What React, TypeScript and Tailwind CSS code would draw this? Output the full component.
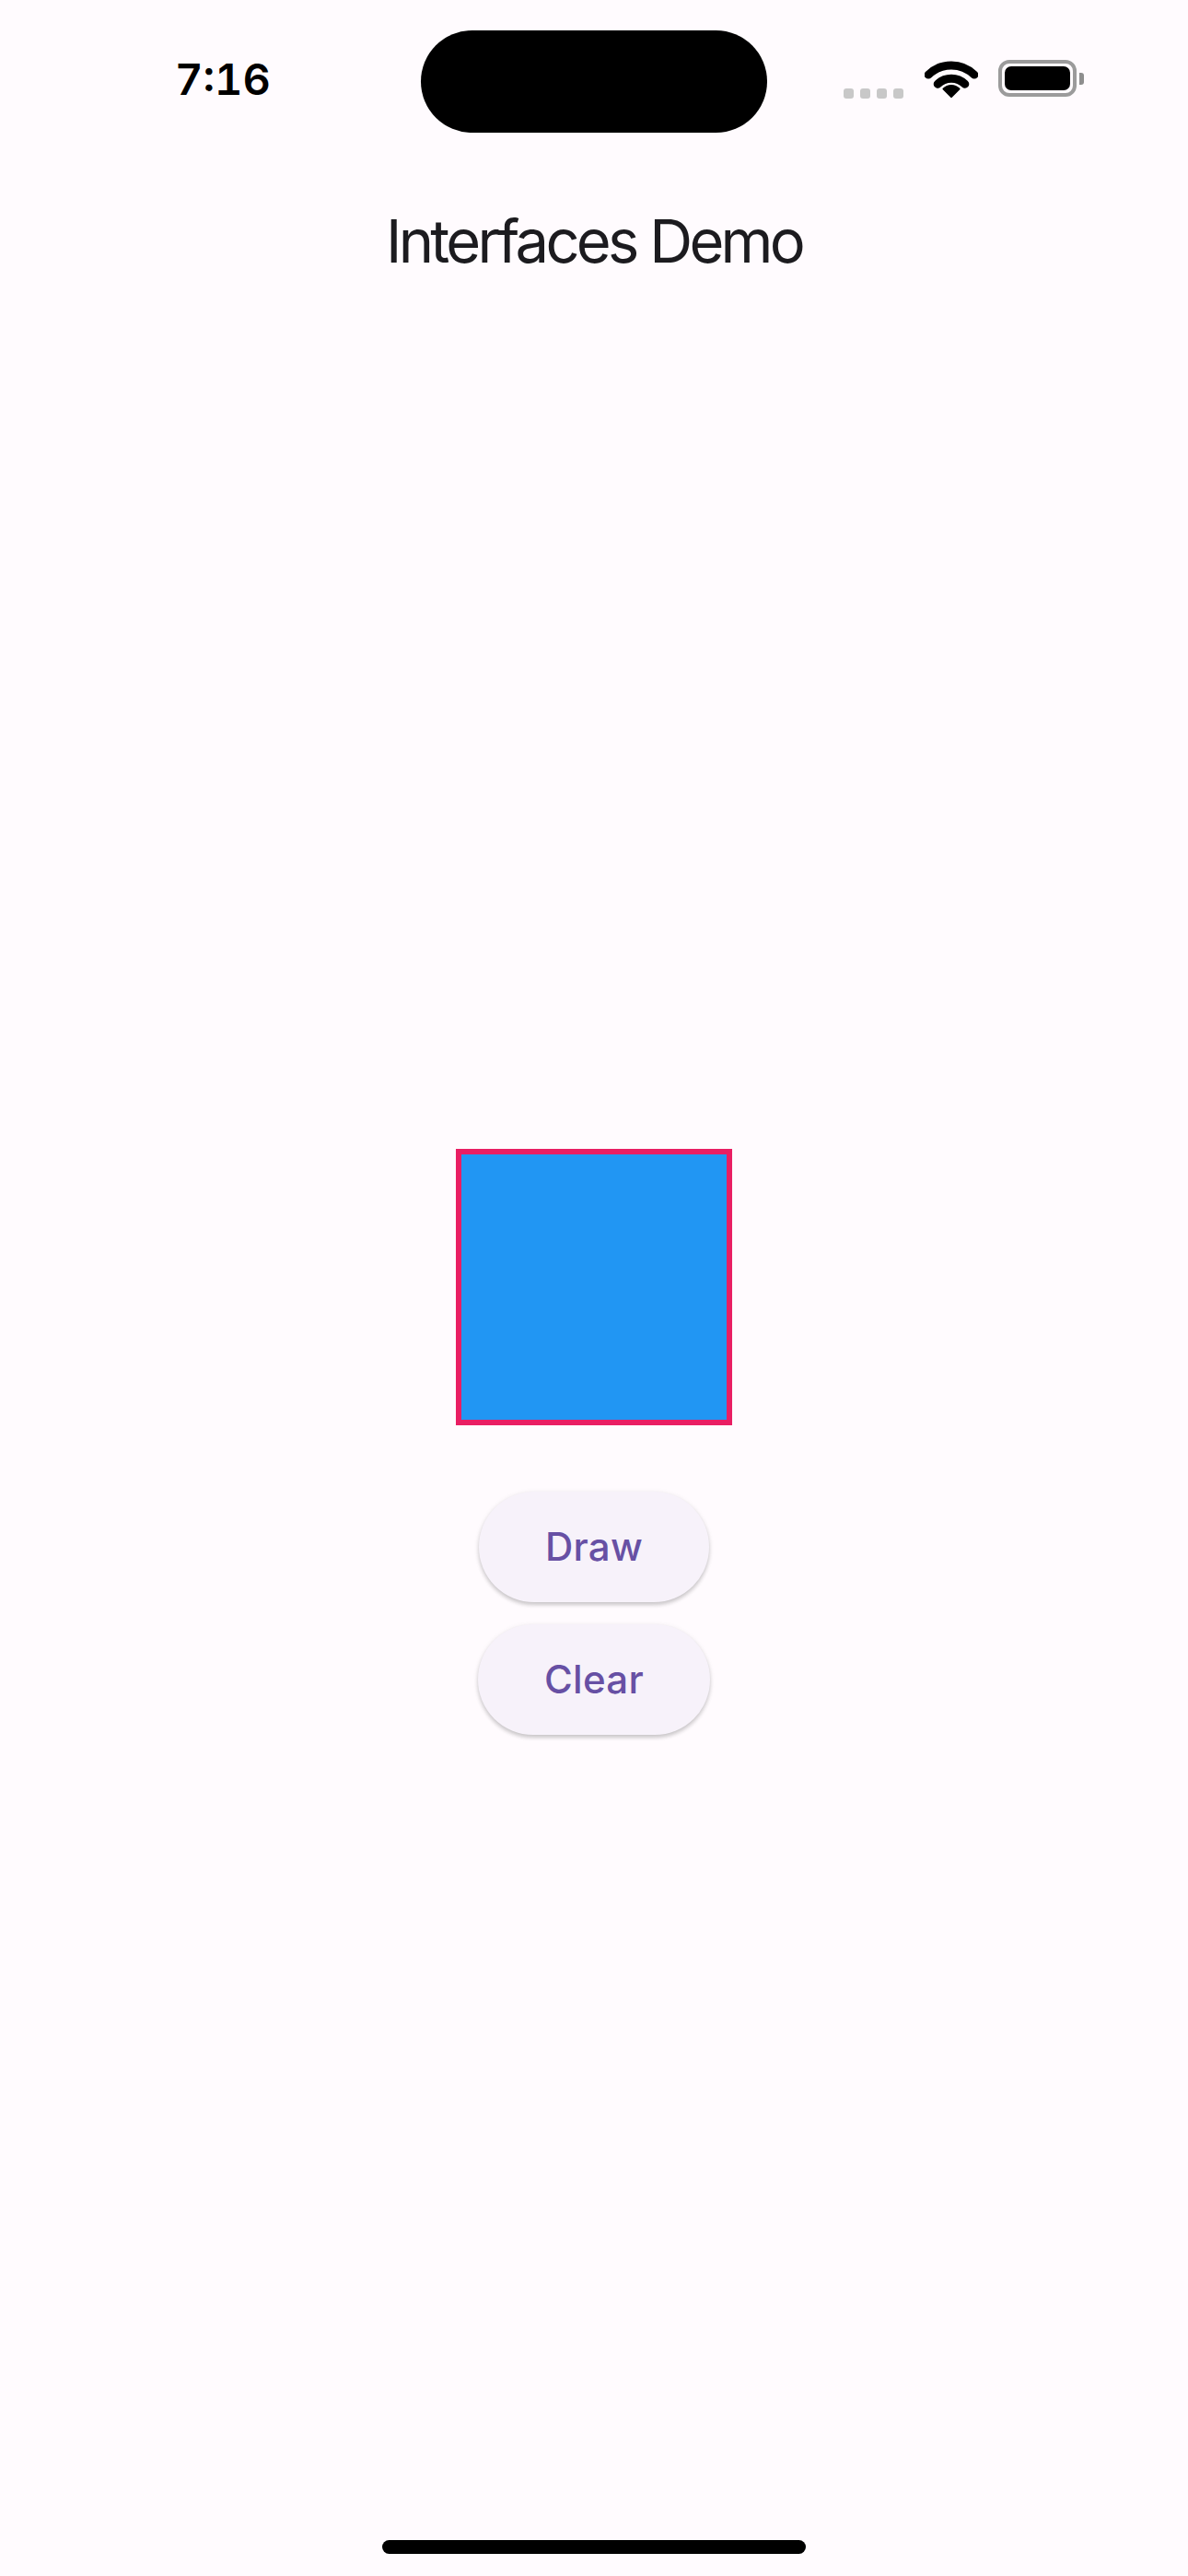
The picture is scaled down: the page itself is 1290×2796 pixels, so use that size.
import React from "react";

function Wifi() {
  return (
    <svg width="58" height="42" viewBox="0 0 58 42" fill="none">
      <path d="M4.1 17.1 A35.5 35.5 0 0 1 53.9 17.1" stroke="#000" strokeWidth="9" strokeLinecap="round" />
      <path d="M14.2 27.2 A21.3 21.3 0 0 1 43.8 27.2" stroke="#000" strokeWidth="9" strokeLinecap="round" />
      <path d="M29 41 L20.5 32.5 A12 12 0 0 1 37.5 32.5 Z" fill="#000" stroke="#000" strokeWidth="2" strokeLinejoin="round" />
    </svg>
  );
}

function Battery() {
  return (
    <div className="flex items-center">
      <div className="w-[85px] h-[40px] rounded-[12px] border-[4px] border-[#9b9b9b] p-[3px] flex">
        <div className="flex-1 rounded-[7px] bg-black" />
      </div>
      <div className="ml-[3px] w-[5px] h-[13px] rounded-r-[3px] bg-[#8e8e8e]" />
    </div>
  );
}

function ActionButton({ label }: { label: string }) {
  return (
    <div className="py-[12px]">
      <button className="h-[120px] px-[72px] rounded-full bg-[#F7F2FA] text-[#6750A4] text-[42px] font-medium tracking-[0.3px] leading-none shadow-[0_3px_4px_rgba(0,0,0,0.18),0_1px_6px_rgba(0,0,0,0.07)] font-['Inter',sans-serif]">
        {label}
      </button>
    </div>
  );
}

export default function App() {
  return (
    <div className="relative w-[1290px] h-[2796px] bg-[#FFFBFE] flex flex-col font-['Inter',sans-serif] overflow-hidden">
      {/* Status bar */}
      <div className="relative h-[177px] shrink-0">
        <div className="flex items-center h-[44px] mt-[63px]">
          <div className="pl-[190px] text-[47px] leading-none font-semibold text-black tabular-nums">7:16</div>
          <div className="ml-auto pr-[113px] flex items-center">
            <div className="flex items-end gap-[7px] self-end mb-[-1px]">
              <div className="w-[11px] h-[11px] rounded-[3px] bg-[#c8c8c8]" />
              <div className="w-[11px] h-[11px] rounded-[3px] bg-[#c8c8c8]" />
              <div className="w-[11px] h-[11px] rounded-[3px] bg-[#c8c8c8]" />
              <div className="w-[11px] h-[11px] rounded-[3px] bg-[#c8c8c8]" />
            </div>
            <div className="ml-[23px]">
              <Wifi />
            </div>
            <div className="ml-[22px]">
              <Battery />
            </div>
          </div>
        </div>
        <div className="absolute top-[33px] left-1/2 -translate-x-1/2 w-[376px] h-[111px] rounded-full bg-black" />
      </div>

      {/* App bar */}
      <div className="h-[168px] shrink-0 flex items-center justify-center">
        <h1 className="text-[65px] leading-none font-normal text-[#1C1B1F] tracking-[-3.7px]">Interfaces Demo</h1>
      </div>

      {/* Body */}
      <div className="flex-1 flex flex-col items-center justify-center">
        <div className="w-[300px] h-[300px] border-[6px] border-[#E91E63] bg-[#2196F3]" />
        <div className="h-[60px]" />
        <ActionButton label="Draw" />
        <ActionButton label="Clear" />
      </div>

      {/* Home indicator */}
      <div className="absolute bottom-[24px] left-1/2 -translate-x-1/2 w-[460px] h-[15px] rounded-full bg-black" />
    </div>
  );
}
